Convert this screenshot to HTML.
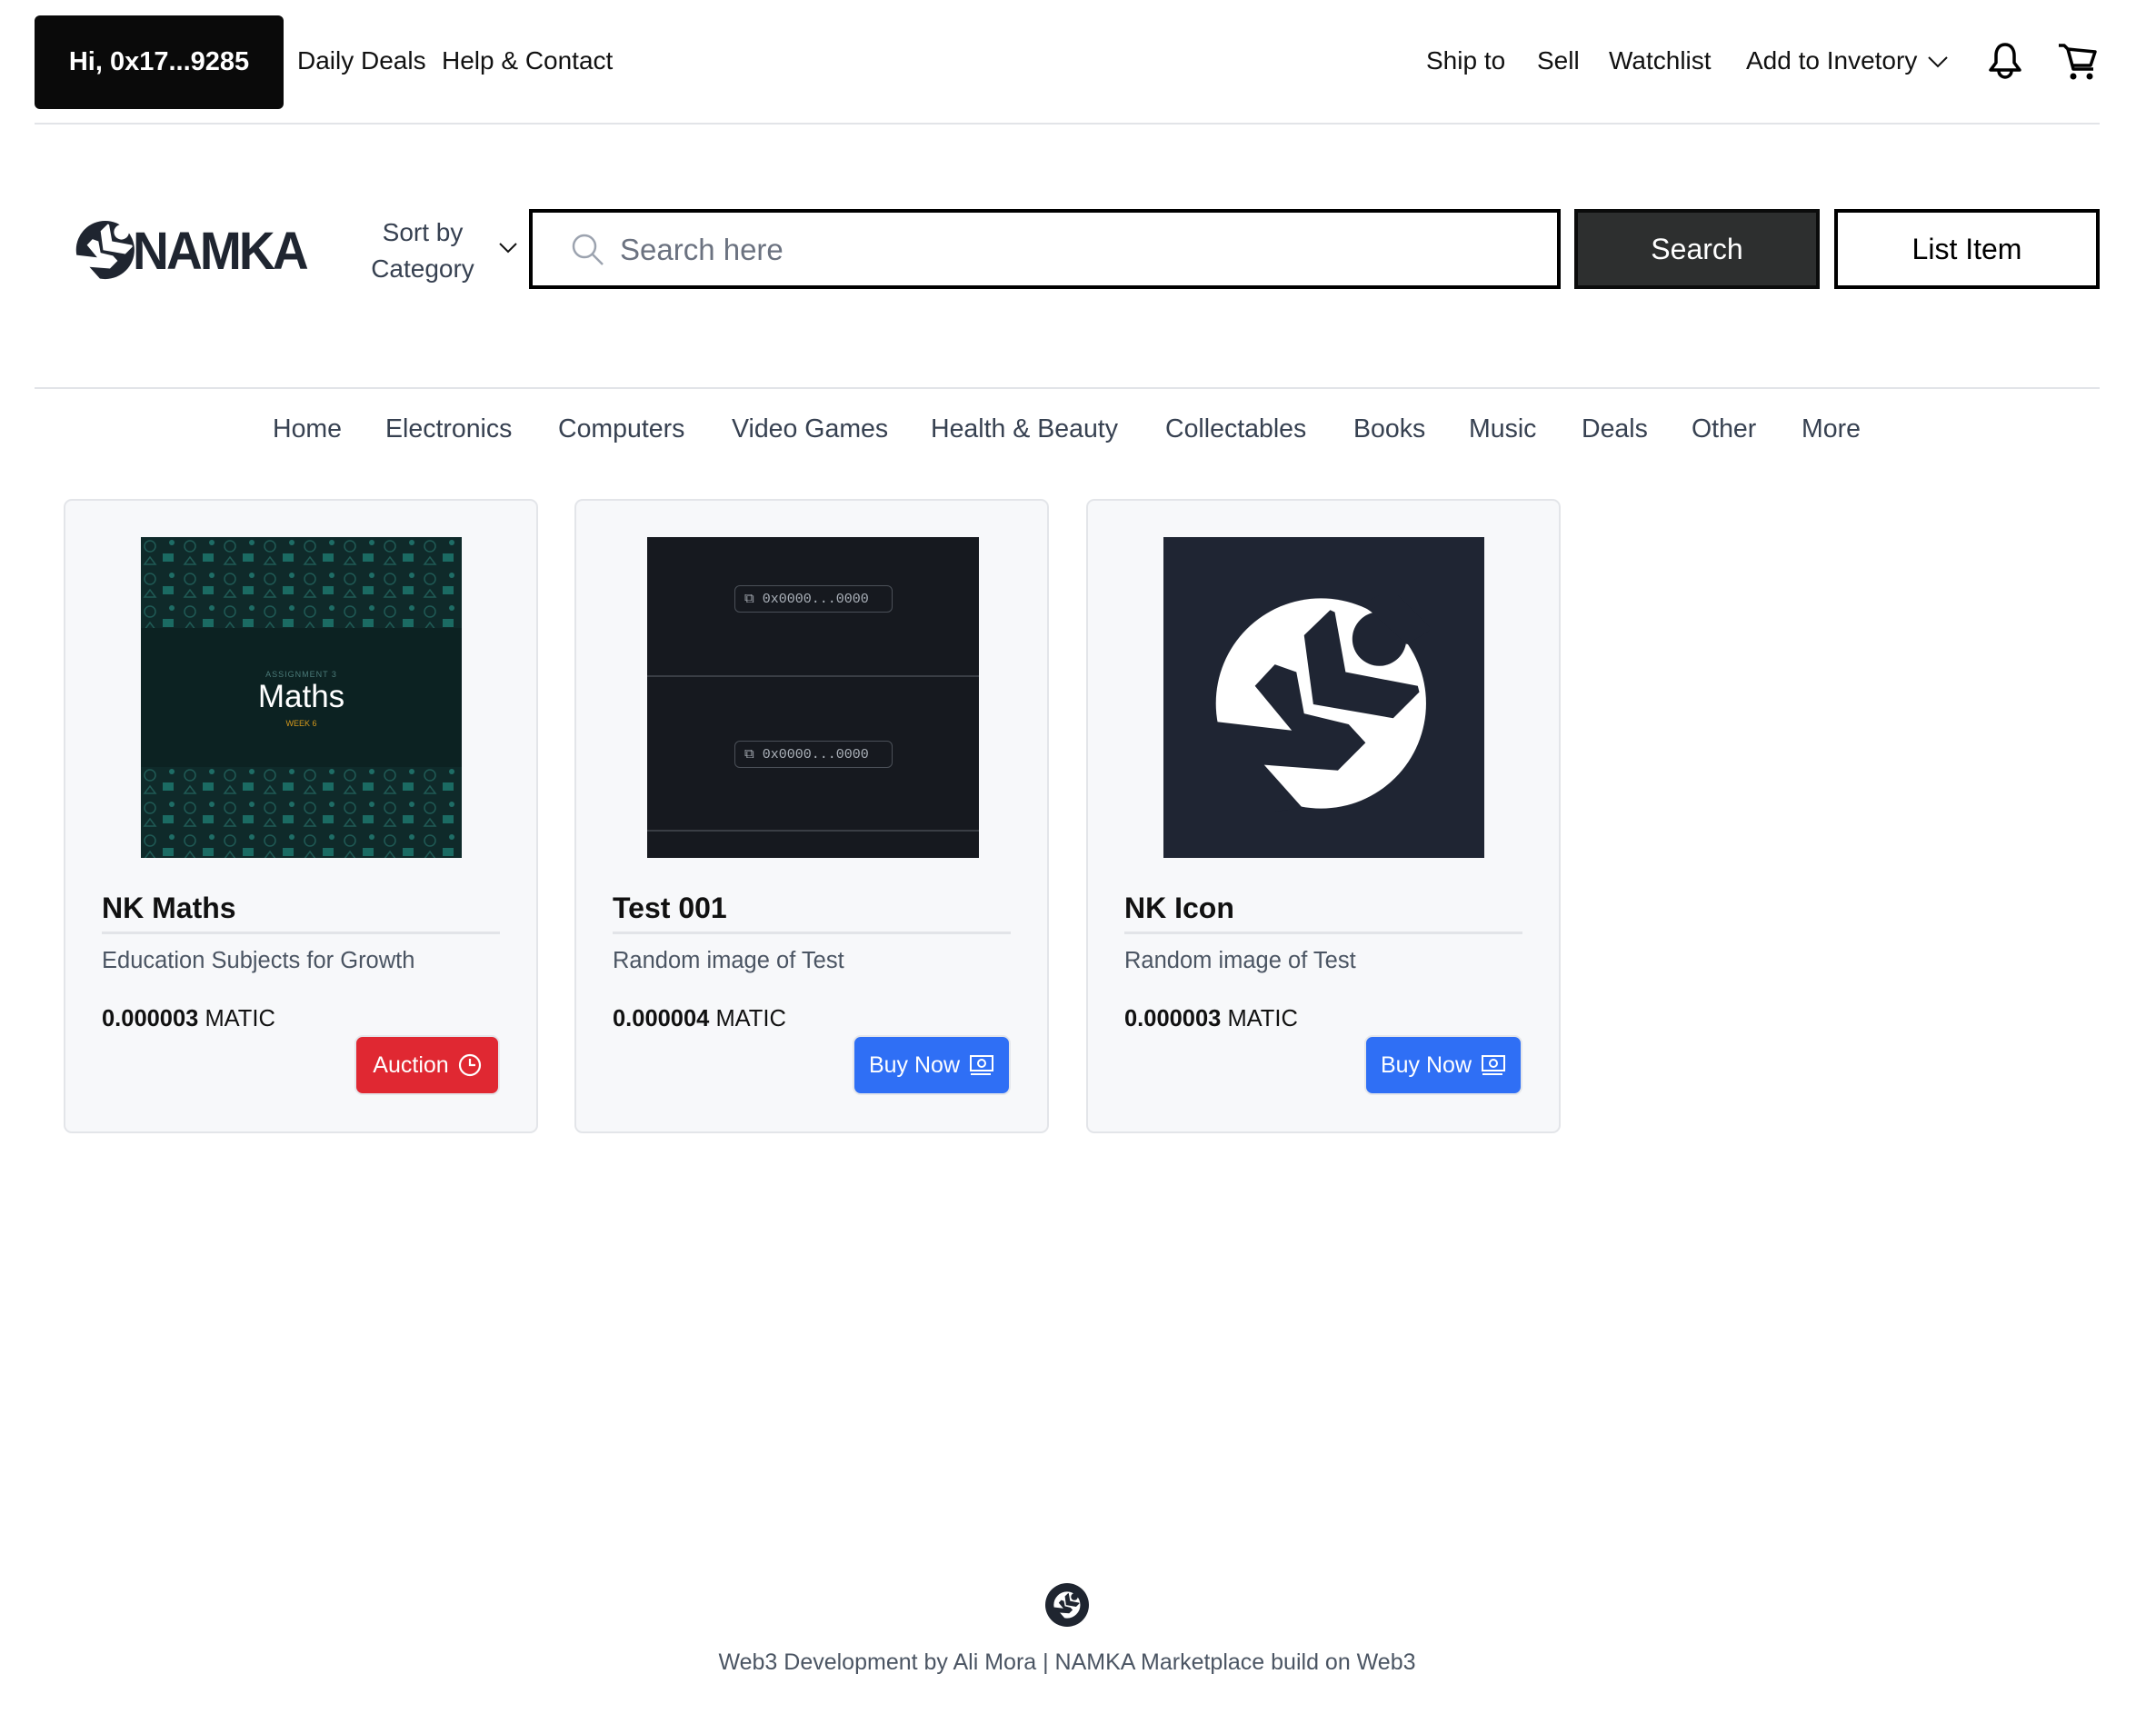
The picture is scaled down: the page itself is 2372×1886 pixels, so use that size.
<!DOCTYPE html>
<html><head><meta charset="utf-8">
<style>
*{margin:0;padding:0;box-sizing:border-box}
body{width:2372px;height:1886px;background:#fff;font-family:"Liberation Sans",sans-serif;position:relative;overflow:hidden;color:#111}
.a{position:absolute;white-space:nowrap}
.top{font-size:28px;color:#111;top:51px}
.nav{font-size:28.5px;color:#374151;top:456px}
.card{position:absolute;top:549px;width:522px;height:698px;background:#f7f8fa;border:2px solid #e3e5e9;border-radius:9px}
.img{position:absolute;left:83px;top:40px;width:353px;height:353px;overflow:hidden}
.ttl{position:absolute;left:40px;font-size:32px;font-weight:bold}
.hr{position:absolute;left:40px;width:438px;top:474px;height:3px;background:#e2e4e8}
.desc{position:absolute;left:40px;top:492px;font-size:25.5px;color:#4b5563}
.price{position:absolute;left:40px;top:556px;font-size:25.5px;color:#111}
.btn{position:absolute;top:588px;height:66px;border-radius:9px;color:#fff;font-size:25px;display:flex;align-items:center;justify-content:center;gap:10px;border:2px solid #e5e7eb}
.pill{position:absolute;left:96px;width:174px;height:30px;border:1.5px solid #4b5058;border-radius:6px;color:#aab0b8;font-family:"Liberation Mono",monospace;font-size:15px;display:flex;align-items:center;padding-left:10px;gap:6px}
</style></head><body>
<svg width="0" height="0" style="position:absolute">
<defs>
<symbol id="lg" viewBox="220 220 704 704">
<circle cx="570" cy="572" r="342" fill="var(--a)"/>
<g fill="var(--b)">
<polygon points="232,632 475,660 355,515 420,445 490,470 515,605 660,640 715,700 625,790 385,772 510,912 150,960 150,600"/>
<polygon points="515,350 600,268 615,275 650,470 885,515 890,535 805,620 545,575"/>
<circle cx="760" cy="362" r="88"/>
<polygon points="700,250 735,275 850,380 930,330 800,200"/>
</g>
</symbol>
</defs>
</svg>

<!-- top bar -->
<div class="a" style="left:38px;top:17px;width:274px;height:103px;background:#0a0a0a;border-radius:6px;color:#fff;font-weight:bold;font-size:29px;display:flex;align-items:center;justify-content:center">Hi, 0x17...9285</div>
<div class="a top" style="left:327px">Daily Deals</div>
<div class="a top" style="left:486px">Help &amp; Contact</div>
<div class="a top" style="left:1569px">Ship to</div>
<div class="a top" style="left:1691px">Sell</div>
<div class="a top" style="left:1770px">Watchlist</div>
<div class="a top" style="left:1921px">Add to Invetory</div>
<svg class="a" style="left:2120px;top:60px" width="24" height="16" viewBox="0 0 24 16"><path d="M2 3l10 10 10-10" fill="none" stroke="#111" stroke-width="2"/></svg>
<svg class="a" style="left:2186px;top:46px" width="40" height="44" viewBox="0 0 40 44"><path d="M20 3c-7 0-10 6-10 12v8l-6 8h32l-6-8v-8c0-6-3-12-10-12z" fill="none" stroke="#000" stroke-width="3.5" stroke-linejoin="round"/><path d="M13 32a7 7 0 0 0 14 0" fill="none" stroke="#000" stroke-width="3.5"/></svg>
<svg class="a" style="left:2263px;top:46px" width="46" height="44" viewBox="0 0 46 44"><path d="M2 4h6l4 4 6 22h22M12 8l30 3-5 15H18" fill="none" stroke="#000" stroke-width="3.5" stroke-linejoin="round"/><circle cx="18" cy="38" r="3.5"/><circle cx="36" cy="38" r="3.5"/></svg>
<div class="a" style="left:38px;top:135px;width:2272px;height:2px;background:#e2e4e8"></div>

<!-- logo row -->
<svg class="a" style="left:83px;top:242px;--a:#1f2530;--b:#fff" width="66" height="66"><use href="#lg"/></svg>
<div class="a" style="left:146px;top:248px;font-size:58px;font-weight:900;color:#1f2530;letter-spacing:-3px;transform:scaleX(0.95);transform-origin:left;line-height:58px">NAMKA</div>
<div class="a" style="left:400px;top:236px;width:130px;text-align:center;font-size:28px;color:#374151;line-height:40px">Sort by<br>Category</div>
<svg class="a" style="left:548px;top:266px" width="22" height="14" viewBox="0 0 22 14"><path d="M2 2l9 9 9-9" fill="none" stroke="#111" stroke-width="2"/></svg>
<div class="a" style="left:582px;top:230px;width:1135px;height:88px;border:4.5px solid #000"></div>
<svg class="a" style="left:628px;top:256px" width="38" height="38" viewBox="0 0 38 38"><circle cx="15" cy="15" r="12" fill="none" stroke="#9ca3af" stroke-width="2.5"/><path d="M24 24l11 11" stroke="#9ca3af" stroke-width="2.5"/></svg>
<div class="a" style="left:682px;top:256px;font-size:33px;color:#6b7280">Search here</div>
<div class="a" style="left:1732px;top:230px;width:270px;height:88px;background:#2d2f2f;border:4.5px solid #0b0c0c;color:#fff;font-size:32px;display:flex;align-items:center;justify-content:center">Search</div>
<div class="a" style="left:2018px;top:230px;width:292px;height:88px;background:#fff;border:4.5px solid #000;color:#000;font-size:32px;display:flex;align-items:center;justify-content:center">List Item</div>
<div class="a" style="left:38px;top:426px;width:2272px;height:2px;background:#e2e4e8"></div>

<!-- nav -->
<div class="a nav" style="left:300px">Home</div>
<div class="a nav" style="left:424px">Electronics</div>
<div class="a nav" style="left:614px">Computers</div>
<div class="a nav" style="left:805px">Video Games</div>
<div class="a nav" style="left:1024px">Health &amp; Beauty</div>
<div class="a nav" style="left:1282px">Collectables</div>
<div class="a nav" style="left:1489px">Books</div>
<div class="a nav" style="left:1616px">Music</div>
<div class="a nav" style="left:1740px">Deals</div>
<div class="a nav" style="left:1861px">Other</div>
<div class="a nav" style="left:1982px">More</div>

<!-- card 1 -->
<div class="card" style="left:70px">
 <div class="img" style="background:#0c2222">
  <svg width="353" height="353" style="position:absolute;left:0;top:0">
   <defs><pattern id="pt" width="44" height="36" patternUnits="userSpaceOnUse">
    <rect width="44" height="36" fill="#0f2a2a"/>
    <circle cx="10" cy="10" r="6" fill="none" stroke="#1f5a55" stroke-width="1.5"/>
    <rect x="24" y="18" width="12" height="9" fill="#1b6b63"/>
    <path d="M4 30l6-8 6 8z" fill="none" stroke="#1f5a55" stroke-width="1.5"/>
    <circle cx="34" cy="6" r="3" fill="#1e6d66"/>
   </pattern></defs>
   <rect width="353" height="100" fill="url(#pt)"/>
   <rect y="253" width="353" height="100" fill="url(#pt)"/>
  </svg>
  <div style="position:absolute;width:353px;top:146px;text-align:center;font-size:9px;color:#4a7a78;letter-spacing:1px">ASSIGNMENT 3</div>
  <div style="position:absolute;width:353px;top:156px;text-align:center;font-size:35px;color:#fff">Maths</div>
  <div style="position:absolute;width:353px;top:200px;text-align:center;font-size:9px;color:#d79a1c">WEEK 6</div>
 </div>
 <div class="hr"></div>
 <div class="ttl" style="top:430px">NK Maths</div>
 <div class="desc">Education Subjects for Growth</div>
 <div class="price"><b>0.000003</b> MATIC</div>
 <div class="btn" style="left:318px;width:160px;background:#e02832">Auction <svg width="26" height="26" viewBox="0 0 26 26"><circle cx="13" cy="13" r="11" fill="none" stroke="#fff" stroke-width="2.2"/><path d="M13 6v7h6" fill="none" stroke="#fff" stroke-width="2.2"/></svg></div>
</div>

<!-- card 2 -->
<div class="card" style="left:632px">
 <div class="img" style="background:#16191f;left:78px;width:365px">
  <div style="position:absolute;left:0;right:0;top:152px;height:1.5px;background:#3a3e45"></div>
  <div style="position:absolute;left:0;right:0;top:322px;height:2px;background:#3a3e45"></div>
  <div class="pill" style="top:53px">⧉ 0x0000...0000</div>
  <div class="pill" style="top:224px">⧉ 0x0000...0000</div>
 </div>
 <div class="hr"></div>
 <div class="ttl" style="top:430px">Test 001</div>
 <div class="desc">Random image of Test</div>
 <div class="price"><b>0.000004</b> MATIC</div>
 <div class="btn" style="left:304px;width:174px;background:#2f6ff5">Buy Now <svg width="28" height="24" viewBox="0 0 28 24"><rect x="2" y="2" width="24" height="16" fill="none" stroke="#fff" stroke-width="2"/><circle cx="14" cy="10" r="4" fill="none" stroke="#fff" stroke-width="2"/><path d="M2 22h22" stroke="#fff" stroke-width="2"/></svg></div>
</div>

<!-- card 3 -->
<div class="card" style="left:1195px">
 <div class="img" style="background:#1f2533">
  <svg style="position:absolute;left:55px;top:64px;--a:#fff;--b:#1f2533" width="238" height="238"><use href="#lg"/></svg>
 </div>
 <div class="hr"></div>
 <div class="ttl" style="top:430px">NK Icon</div>
 <div class="desc">Random image of Test</div>
 <div class="price"><b>0.000003</b> MATIC</div>
 <div class="btn" style="left:304px;width:174px;background:#2f6ff5">Buy Now <svg width="28" height="24" viewBox="0 0 28 24"><rect x="2" y="2" width="24" height="16" fill="none" stroke="#fff" stroke-width="2"/><circle cx="14" cy="10" r="4" fill="none" stroke="#fff" stroke-width="2"/><path d="M2 22h22" stroke="#fff" stroke-width="2"/></svg></div>
</div>

<!-- footer -->
<svg class="a" style="left:1150px;top:1742px;--a:#fff;--b:#1f2530" width="48" height="48" viewBox="0 0 48 48"><circle cx="24" cy="24" r="24" fill="#1f2530"/><svg x="9" y="8" width="30" height="32"><use href="#lg"/></svg></svg>
<div class="a" style="left:0;width:2348px;text-align:center;top:1815px;font-size:25px;color:#4b5563">Web3 Development by Ali Mora | NAMKA Marketplace build on Web3</div>
</body></html>
